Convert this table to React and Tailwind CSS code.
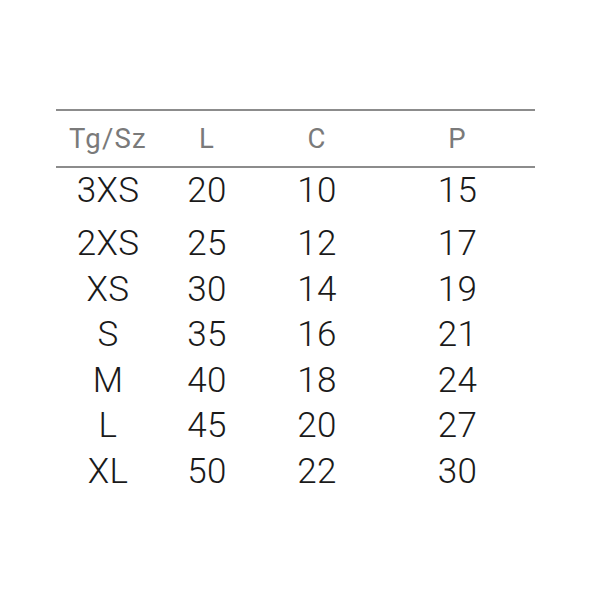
export default function App() {
  const rows = [
    ["3XS", "20", "10", "15"],
    ["2XS", "25", "12", "17"],
    ["XS", "30", "14", "19"],
    ["S", "35", "16", "21"],
    ["M", "40", "18", "24"],
    ["L", "45", "20", "27"],
    ["XL", "50", "22", "30"],
  ];
  const cols = ["w-[104px]", "w-[94px]", "w-[126px]", "w-[155px]"];
  return (
    <div
      className="w-[600px] h-[600px] bg-white pt-[109px] pl-[56px]"
      style={{ fontFamily: "Roboto, 'Liberation Sans', sans-serif" }}
    >
      <div className="w-[479px]">
        <div className="border-t-2 border-b-2 border-[#8c8c8c] flex h-[59px] items-start">
          {["Tg/Sz", "L", "C", "P"].map((h, i) => (
            <div
              key={h}
              className={`${cols[i]} text-center text-[27.5px] leading-[55px] font-normal text-[#7a7a7a] tracking-[1.2px]`}
            >
              {h}
            </div>
          ))}
        </div>
        {rows.map((r, ri) => (
          <div
            key={r[0]}
            className={`flex ${ri === 0 ? "h-[53px]" : "h-[45.6px]"}`}
          >
            {r.map((c, i) => (
              <div
                key={i}
                className={`${cols[i]} text-center text-[35px] leading-[46px] font-light text-[#1a1a1a] tracking-[0.3px]`}
              >
                {c}
              </div>
            ))}
          </div>
        ))}
      </div>
    </div>
  );
}
